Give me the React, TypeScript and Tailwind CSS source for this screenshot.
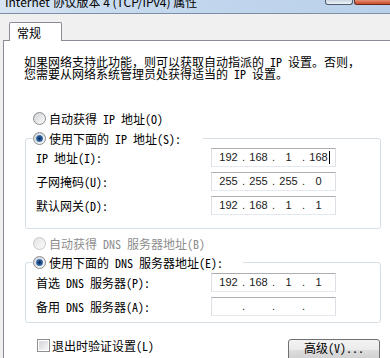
import { Fragment } from "react";

function Radio({ checked = false, disabled = false }: { checked?: boolean; disabled?: boolean }) {
  return (
    <span
      className={
        disabled
          ? "flex h-[13px] w-[13px] shrink-0 items-center justify-center rounded-full border border-[#c6c6c6] bg-[linear-gradient(135deg,#e4e4e4,#fbfbfb)]"
          : "flex h-[13px] w-[13px] shrink-0 items-center justify-center rounded-full border border-[#8a8c8f] bg-[linear-gradient(135deg,#cdd0d4,#fdfdfd)]"
      }
    >
      {checked && (
        <span className="h-[7px] w-[7px] rounded-full bg-[radial-gradient(circle,#0c2750_0%,#275c9c_50%,#8dbcec_100%)]" />
      )}
    </span>
  );
}

function IpBox({ parts, caret = false }: { parts: string[]; caret?: boolean }) {
  return (
    <div className="flex h-[19px] w-[125px] items-center border border-[#abadb3] border-x-[#dbdfe6] border-b-[#e3e9ef] bg-white pl-[4px] font-['Liberation_Sans',sans-serif] text-[11px] text-[#1a1a1a]">
      {parts.map((p, i) => (
        <Fragment key={i}>
          {i > 0 && <span className="w-[5px] text-center">.</span>}
          <span className="w-[25px] text-center">{p}</span>
        </Fragment>
      ))}
      {caret && <span className="-ml-[2px] h-[13px] w-px bg-black" />}
    </div>
  );
}

function Field({ label, parts, caret }: { label: string; parts: string[]; caret?: boolean }) {
  return (
    <div className="flex h-[19px] items-center pl-[10px]">
      <span className="w-[175px] leading-[13px]">{label}</span>
      <IpBox parts={parts} caret={caret} />
    </div>
  );
}

export default function App() {
  return (
    <div className="h-[358px] w-[390px] overflow-hidden bg-[#f0f0f0] font-['Noto_Sans_Mono_CJK_SC','Noto_Sans_CJK_SC',sans-serif] text-[12px] text-black">
      {/* title bar, only its lower part is in the shot */}
      <div className="flex h-[14px] items-start overflow-hidden border-b border-[#7d8fa5] bg-[linear-gradient(90deg,#d6e4f3_0%,#c4d8ee_40%,#b9d0ea_100%)]">
        <span className="-mt-[4px] ml-[5px] whitespace-nowrap font-['Noto_Sans_CJK_SC',sans-serif] text-[12px] leading-[12px]">
          Internet 协议版本 4 (TCP/IPv4) 属性
        </span>
        <div className="ml-auto flex items-start gap-[1px]">
          <div className="h-[5px] w-[28px] rounded-b-[3px] border border-t-0 border-[#4f5c6c] bg-[linear-gradient(#c9d5e3,#eef3f8)]" />
          <div className="h-[5px] w-[36px] rounded-bl-[3px] border border-t-0 border-r-0 border-[#6e2b1d] bg-[linear-gradient(#e39072,#c9492b)]" />
        </div>
      </div>

      <div className="pl-[3px] pt-[8px]">
        <div className="relative z-10 -mb-px ml-[6px] flex h-[19px] w-[53px] items-center rounded-t-[2px] border border-b-0 border-[#898c95] bg-white pl-[7px] leading-[13px]">
          常规
        </div>

        <div className="flex w-[430px] flex-col border-l border-t border-[#898c95] bg-white">
          <p className="ml-[20px] mt-[15px] leading-[12px]">
            如果网络支持此功能，则可以获取自动指派的 IP 设置。否则，
            <br />
            您需要从网络系统管理员处获得适当的 IP 设置。
          </p>

          <label className="ml-[29px] mt-[32px] flex items-center gap-[3px] leading-[13px]">
            <Radio />
            自动获得 IP 地址(O)
          </label>

          <div className="ml-[21px] mt-[13px] w-[356px] rounded-[3px] border border-[#d5dfe5] pb-[13px]">
            <label className="-mt-[7px] ml-[7px] flex w-[170px] items-center gap-[3px] bg-white leading-[13px]">
              <Radio checked />
              使用下面的 IP 地址(S):
            </label>
            <div className="mt-[3px] flex flex-col gap-[5px]">
              <Field label="IP 地址(I):" parts={["192", "168", "1", "168"]} caret />
              <Field label="子网掩码(U):" parts={["255", "255", "255", "0"]} />
              <Field label="默认网关(D):" parts={["192", "168", "1", "1"]} />
            </div>
          </div>

          <label className="ml-[29px] mt-[8px] flex items-center gap-[3px] leading-[13px] text-[#8d8d8d]">
            <Radio disabled />
            自动获得 DNS 服务器地址(B)
          </label>

          <div className="ml-[21px] mt-[12px] w-[356px] rounded-[3px] border border-[#d5dfe5] pb-[6px]">
            <label className="-mt-[7px] ml-[7px] flex w-[210px] items-center gap-[3px] bg-white leading-[13px]">
              <Radio checked />
              使用下面的 DNS 服务器地址(E):
            </label>
            <div className="mt-[4px] flex flex-col gap-[5px]">
              <Field label="首选 DNS 服务器(P):" parts={["192", "168", "1", "1"]} />
              <Field label="备用 DNS 服务器(A):" parts={["", "", "", ""]} />
            </div>
          </div>

          <div className="mt-[16px] flex w-[376px] items-start">
            <label className="ml-[33px] flex items-center gap-[2px] leading-[13px]">
              <span className="flex h-[13px] w-[13px] items-center justify-center border border-[#8f8f8f] bg-white">
                <span className="h-[9px] w-[9px] bg-[linear-gradient(135deg,#d2d4d8,#f7f7f8)]" />
              </span>
              退出时验证设置(L)
            </label>
            <button className="ml-auto flex h-[22px] w-[92px] justify-center rounded-[3px] border border-[#707070] bg-[linear-gradient(#f3f3f3_0%,#ebebeb_48%,#dddddd_52%,#cfcfcf_100%)] pt-px leading-[14px]">
              高级(V)...
            </button>
          </div>
        </div>
      </div>
    </div>
  );
}
